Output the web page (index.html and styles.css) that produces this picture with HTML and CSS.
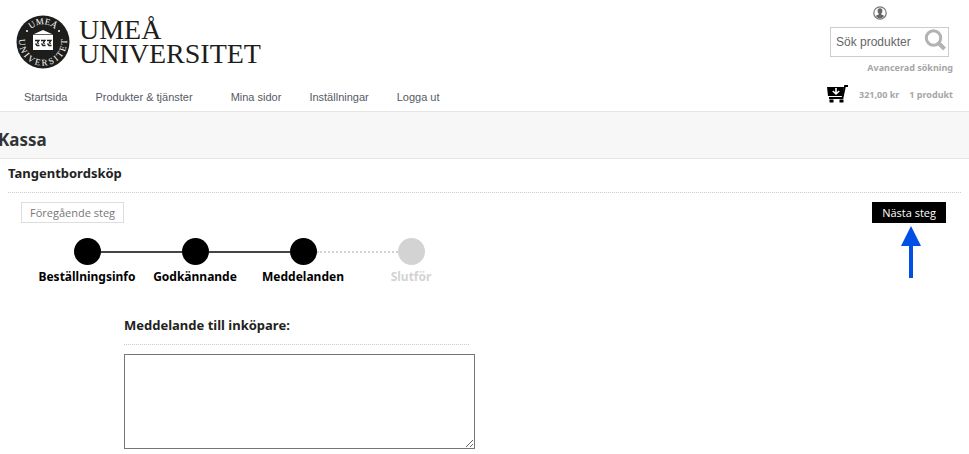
FILE: index.html
```html
<!DOCTYPE html>
<html lang="sv">
<head>
<meta charset="utf-8">
<meta name="viewport" content="width=device-width, initial-scale=1">
<title>Kassa</title>
<link rel="stylesheet" href="styles.css">
</head>
<body>
<header class="header">
  <div class="header-main">
    <a class="logo" href="#">
      <svg class="seal" viewBox="0 0 54 54" aria-hidden="true">
        <defs>
          <path id="arc-top" d="M9.500 27a17.500 17.500 0 0 1 35 0"/>
          <path id="arc-bottom" d="M5.500 16a24 24 0 1 0 43 0"/>
        </defs>
        <circle cx="27" cy="27" r="26.500" fill="#1d1d1b"/>
        <text class="seal-text"><textPath href="#arc-top" startOffset="50%" text-anchor="middle">UMEÅ</textPath></text>
        <text class="seal-text"><textPath href="#arc-bottom" startOffset="50%" text-anchor="middle">U N I V E R S I T E T</textPath></text>
        <circle cx="11" cy="16" r="1" fill="#fff"/>
        <circle cx="43" cy="16" r="1" fill="#fff"/>
        <path fill="#fff" d="M17 19.500 27 15l10 4.500V35H17z"/>
        <path stroke="#1d1d1b" stroke-width=".7" d="M17 19.500h20"/>
        <path fill="none" stroke="#1d1d1b" stroke-width="1.300" d="M19 25.500h4l-1.500 2 1 1.500M19.500 28.500l1.500 2h2.500M25 25.500h4l-1.500 2 1 1.500M25.500 28.500l1.500 2h2.500M31 25.500h4l-1.500 2 1 1.500M31.500 28.500l1.500 2h2.500"/>
      </svg>
      <span class="logo-text">UMEÅ<br>UNIVERSITET</span>
    </a>
    <nav class="nav">
      <a href="#">Startsida</a>
      <a href="#">Produkter &amp; tjänster</a>
      <a class="nav-split" href="#">Mina sidor</a>
      <a href="#">Inställningar</a>
      <a href="#">Logga ut</a>
    </nav>
  </div>
  <div class="header-side">
    <a class="user" href="#" aria-label="Mitt konto">
      <svg viewBox="0 0 14 14" width="14" height="14">
        <circle cx="7" cy="7" r="6.200" fill="#fff" stroke="#777" stroke-width="1.200"/>
        <path fill="#666" d="M7 2.300c1.700 0 2.500 1.100 2.400 2.600-.1 1.300-.6 2.100-1.100 2.600v1c1.300.4 2.400.8 2.900 1.500A5.500 5.500 0 0 1 7 12.500 5.500 5.500 0 0 1 2.800 10c.5-.7 1.600-1.100 2.900-1.500v-1c-.5-.5-1-1.300-1.100-2.600C4.500 3.400 5.300 2.300 7 2.300z"/>
      </svg>
    </a>
    <form class="search">
      <input type="text" placeholder="Sök produkter" aria-label="Sök produkter">
      <button type="button" aria-label="Sök">
        <svg viewBox="0 0 22 22" width="22" height="22" fill="none" stroke="#b3b3b3">
          <circle cx="9.500" cy="9" r="7.200" stroke-width="3"/>
          <path stroke-width="4" d="m14.500 14 6 6"/>
        </svg>
      </button>
    </form>
    <a class="advanced" href="#">Avancerad sökning</a>
    <a class="cart" href="#">
      <svg viewBox="0 0 22 18" width="22" height="18" aria-hidden="true">
        <path d="M0 2h17l-1.500 9H1z"/>
        <path fill="none" stroke="#000" stroke-width="1.800" d="M21 1h-3l-2.500 12H2"/>
        <path fill="none" stroke="#fff" stroke-width="1.600" d="M9 3v6M5.800 6 9 9l3.200-3"/>
        <path d="M2.500 14.500h4v3h-4zM12.500 14.500h4v3h-4z"/>
      </svg>
      <span>321,00 kr</span>
      <span>1 produkt</span>
    </a>
  </div>
</header>
<div class="title-bar"><h1>Kassa</h1></div>
<main class="main">
  <h2 class="section-title">Tangentbordsköp</h2>
  <div class="actions">
    <button class="button" type="button">Föregående steg</button>
    <div class="next">
      <button class="button button-dark" type="button">Nästa steg</button>
      <svg class="arrow" viewBox="0 0 20 52" width="20" height="52" aria-hidden="true">
        <path fill="#0050e6" d="M10 0l10 20h-8v32H8V20H0z"/>
      </svg>
    </div>
  </div>
  <ol class="steps">
    <li class="step">Beställningsinfo</li>
    <li class="step">Godkännande</li>
    <li class="step">Meddelanden</li>
    <li class="step step-pending">Slutför</li>
  </ol>
  <div class="message">
    <label class="message-label" for="message">Meddelande till inköpare:</label>
    <textarea id="message"></textarea>
  </div>
</main>
</body>
</html>
```
FILE: styles.css
```css
* {
  box-sizing: border-box;
}

body {
  margin: 0;
  background: #fff;
  color: #222;
  font-family: "Noto Sans", "Open Sans", sans-serif;
  font-size: 12px;
}

a {
  color: inherit;
  text-decoration: none;
}

button,
input {
  font: inherit;
}

h1,
h2 {
  margin: 0;
}

.header {
  display: flex;
  justify-content: space-between;
  padding: 0 16px;
  border-bottom: 1px solid #e5e5e5;
}

.header-main {
  padding-top: 15px;
}

.logo {
  display: flex;
  align-items: center;
  gap: 9px;
}

.seal {
  width: 54px;
  height: 54px;
}

.seal-text {
  fill: #fff;
  font: 9px "Liberation Serif", serif;
}

.logo-text {
  color: #1d1d1b;
  font: 28px/24px "Liberation Serif", serif;
}

.nav {
  display: flex;
  gap: 28px;
  padding: 20px 8px 6px;
  color: #555a66;
  font: 11px/16px "Liberation Sans", sans-serif;
}

.nav-split {
  margin-left: 10px;
}

.header-side {
  display: flex;
  flex-direction: column;
  align-items: flex-end;
  padding-top: 6px;
  color: #a6a6a6;
  font-size: 9px;
  font-weight: bold;
}

.user {
  display: flex;
  margin-right: 66px;
}

.search {
  display: flex;
  align-items: center;
  width: 119px;
  height: 30px;
  margin: 7px 4px 3px 0;
  border: 1px solid #ccc;
}

.search input {
  flex: 1;
  min-width: 0;
  padding: 0 0 0 5px;
  border: 0;
  background: none;
  font: 12px "Liberation Sans", sans-serif;
}

.search input::placeholder {
  color: #666;
}

.search button {
  display: flex;
  padding: 0 2px 4px 0;
  border: 0;
  background: none;
}

.advanced {
  line-height: 16px;
}

.cart {
  display: flex;
  align-items: center;
  gap: 10px;
  margin-top: 9px;
}

.cart svg {
  fill: #000;
}

.title-bar {
  padding: 16px 0 6px;
  border-bottom: 1px solid #e5e5e5;
  background: #f7f7f7;
}

.title-bar h1 {
  margin-left: -2px;
  color: #333;
  font-size: 17px;
  line-height: 24px;
}

.main {
  padding: 4px 8px;
}

.section-title,
.message-label {
  display: block;
  padding-bottom: 9px;
  border-bottom: 1px dotted #ccc;
  font-size: 13px;
  font-weight: bold;
  line-height: 20px;
}

.actions {
  display: flex;
  justify-content: space-between;
  align-items: flex-start;
  padding: 9px 15px 0 13px;
}

.button {
  display: block;
  padding: 0 8px;
  border: 1px solid #ddd;
  background: #fff;
  color: #777;
  font-family: "Open Sans", "Noto Sans", sans-serif;
  font-size: 11px;
  line-height: 19px;
}

.button-dark {
  padding: 0 9px;
  border-color: #000;
  background: #000;
  color: #fff;
}

.next {
  position: relative;
}

.arrow {
  position: absolute;
  top: 24px;
  left: calc(50% - 8px);
}

.steps {
  display: flex;
  width: 432px;
  margin: 15px 0 0 25px;
  padding: 0;
  color: #000;
  font-weight: bold;
  line-height: 20px;
  list-style: none;
}

.step {
  display: flex;
  flex: 1 0 0;
  flex-direction: column;
  align-items: center;
  gap: 2px;
  position: relative;
}

.step::before {
  content: "";
  width: 27px;
  height: 27px;
  border-radius: 50%;
  background: #000;
}

.step + .step::after {
  content: "";
  position: absolute;
  top: 13px;
  right: calc(50% + 13px);
  width: calc(100% - 27px);
  border-top: 2px solid #444;
}

.step-pending {
  color: #d3d3d3;
}

.step-pending::before {
  background: #d3d3d3;
}

.step + .step-pending::after {
  border-top: 2px dotted #d3d3d3;
}

.message {
  max-width: 351px;
  margin: 28px 0 0 116px;
}

.message-label {
  margin-right: 6px;
}

.message textarea {
  display: block;
  width: 100%;
  height: 95px;
  margin-top: 9px;
  border: 1px solid #767676;
}
```
